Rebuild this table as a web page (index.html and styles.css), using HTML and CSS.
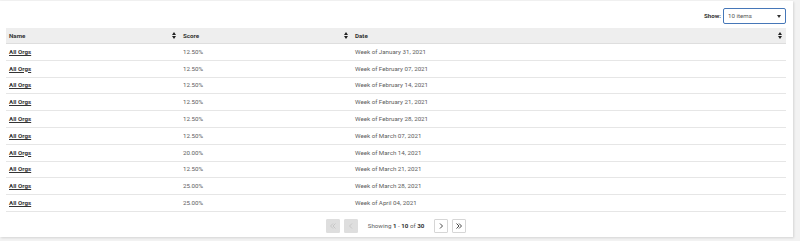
FILE: index.html
```html
<!DOCTYPE html>
<html lang="en">
<head>
    <meta charset="UTF-8">
    <meta name="viewport" content="width=device-width, initial-scale=1.0">
    <title>Scores</title>
    <link rel="stylesheet" href="styles.css">
</head>
<body>
    <div class="card">
        <div class="toolbar">
            <label class="show-label" for="page-size">Show:</label>
            <div class="select">
                <span>10 items</span>
                <span class="caret"></span>
            </div>
        </div>

        <table class="grid">
            <thead>
                <tr>
                    <th class="col-name">Name <span class="sort"></span></th>
                    <th class="col-score">Score <span class="sort"></span></th>
                    <th>Date <span class="sort"></span></th>
                </tr>
            </thead>
            <tbody>
                <tr><td><a href="#">All Orgs</a></td><td>12.50%</td><td>Week of January 31, 2021</td></tr>
                <tr><td><a href="#">All Orgs</a></td><td>12.50%</td><td>Week of February 07, 2021</td></tr>
                <tr><td><a href="#">All Orgs</a></td><td>12.50%</td><td>Week of February 14, 2021</td></tr>
                <tr><td><a href="#">All Orgs</a></td><td>12.50%</td><td>Week of February 21, 2021</td></tr>
                <tr><td><a href="#">All Orgs</a></td><td>12.50%</td><td>Week of February 28, 2021</td></tr>
                <tr><td><a href="#">All Orgs</a></td><td>12.50%</td><td>Week of March 07, 2021</td></tr>
                <tr><td><a href="#">All Orgs</a></td><td>20.00%</td><td>Week of March 14, 2021</td></tr>
                <tr><td><a href="#">All Orgs</a></td><td>12.50%</td><td>Week of March 21, 2021</td></tr>
                <tr><td><a href="#">All Orgs</a></td><td>25.00%</td><td>Week of March 28, 2021</td></tr>
                <tr><td><a href="#">All Orgs</a></td><td>25.00%</td><td>Week of April 04, 2021</td></tr>
            </tbody>
        </table>

        <div class="pager">
            <button class="page-btn" disabled>
                <svg viewBox="0 0 12 12"><path d="M6 3.5 3.5 6 6 8.5M8.5 3.5 6 6l2.5 2.5"/></svg>
            </button>
            <button class="page-btn" disabled>
                <svg viewBox="0 0 12 12"><path d="M7 3.5 4.5 6 7 8.5"/></svg>
            </button>
            <span class="page-info">Showing <b>1</b> - <b>10</b> of <b>30</b></span>
            <button class="page-btn">
                <svg viewBox="0 0 12 12"><path d="M5 3.5 7.5 6 5 8.5"/></svg>
            </button>
            <button class="page-btn">
                <svg viewBox="0 0 12 12"><path d="M3.5 3.5 6 6 3.5 8.5M6 3.5 8.5 6 6 8.5"/></svg>
            </button>
        </div>
    </div>
</body>
</html>
```

FILE: styles.css
```css
html, body {
    margin: 0;
    height: 100%;
}
body {
    font-family: Roboto, "Liberation Sans", sans-serif;
    font-size: 6.2px;
    color: #5c5c5c;
    background: #f2f2f2;
}
.card {
    background: white;
    width: 793px;
    height: 236px;
    margin-top: 1px;
    box-shadow: 1px 1px 2px rgba(0,0,0,0.12);
    box-sizing: border-box;
    padding: 7px 7px 0 6px;
}
.toolbar {
    display: flex;
    justify-content: flex-end;
    align-items: center;
    gap: 2px;
    height: 16px;
}
.show-label {
    font-weight: 700;
    color: #333;
}
.select {
    width: 63px;
    height: 16px;
    box-sizing: border-box;
    border: 1px solid #4677b8;
    border-radius: 2px;
    display: flex;
    align-items: center;
    justify-content: space-between;
    padding: 0 4px;
    color: #555;
}
.caret {
    width: 0;
    height: 0;
    border-left: 2px solid transparent;
    border-right: 2px solid transparent;
    border-top: 3px solid #333;
}
.grid {
    width: 100%;
    border-collapse: collapse;
    margin-top: 4px;
}
.grid th {
    background: #eeeeee;
    text-align: left;
    font-weight: 700;
    color: #333;
    height: 15px;
    padding: 0 3px;
    border-bottom: 1px solid #dedede;
    position: relative;
}
.col-name { width: 168px; }
.col-score { width: 166px; }
.sort {
    position: absolute;
    right: 4px;
    top: 4px;
    width: 4px;
    height: 7px;
}
.sort::before, .sort::after {
    content: "";
    position: absolute;
    left: 0;
    border-left: 2px solid transparent;
    border-right: 2px solid transparent;
}
.sort::before {
    top: 0;
    border-bottom: 3px solid #222;
}
.sort::after {
    bottom: 0;
    border-top: 3px solid #222;
}
.grid td {
    height: 15.8px;
    padding: 0 3px;
    border-bottom: 1px solid #e6e6e6;
}
.grid a {
    color: #333;
    font-weight: 700;
    text-decoration: underline;
}
.pager {
    display: flex;
    justify-content: center;
    align-items: center;
    margin-top: 7px;
    gap: 4px;
}
.page-btn {
    width: 14px;
    height: 14px;
    padding: 0;
    display: flex;
    align-items: center;
    justify-content: center;
    background: white;
    border: 1px solid #d6d6d6;
    border-radius: 1px;
}
.page-btn svg {
    width: 12px;
    height: 12px;
    fill: none;
    stroke: #333;
    stroke-width: 0.9;
}
.page-btn:disabled {
    background: #dedede;
    border-color: #dedede;
}
.page-btn:disabled svg {
    stroke: #c4c4c4;
}
.page-info {
    margin: 0 6px;
}
.page-info b {
    color: #333;
}
```
